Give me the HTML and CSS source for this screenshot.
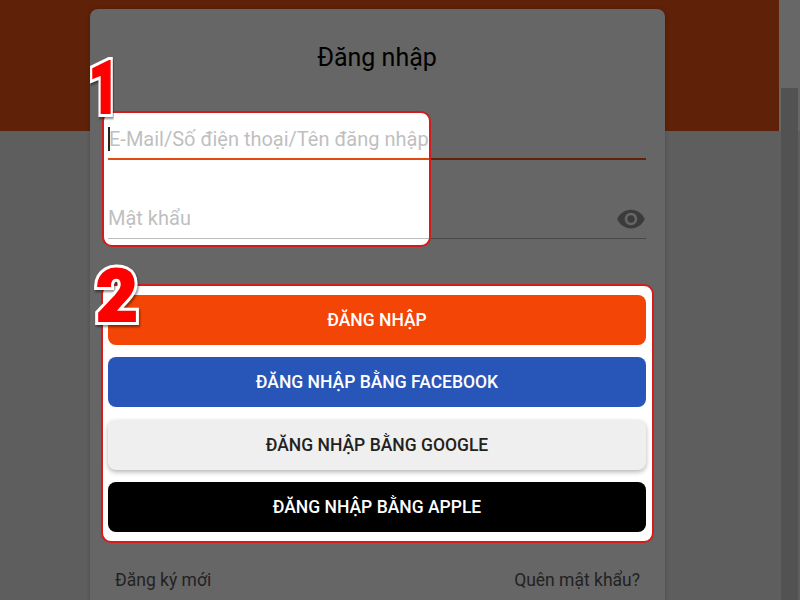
FILE: index.html
```html
<!DOCTYPE html>
<html lang="vi">
<head>
<meta charset="utf-8">
<title>Đăng nhập</title>
<link rel="stylesheet" href="styles.css">
</head>
<body>
<div class="page">
  <main class="main">
    <header class="topbar"></header>
    <section class="dialog">
      <h1 class="title">Đăng nhập</h1>
      <div class="fields">
        <div class="field field-active"></div>
        <div class="field field-password">
          <svg class="eye" viewBox="0 0 24 24" aria-hidden="true"><path d="M12 4.5C7 4.5 2.73 7.61 1 12c1.73 4.39 6 7.5 11 7.5s9.27-3.11 11-7.5c-1.73-4.39-6-7.5-11-7.5zM12 17c-2.76 0-5-2.24-5-5s2.24-5 5-5 5 2.24 5 5-2.24 5-5 5zm0-8c-1.66 0-3 1.34-3 3s1.34 3 3 3 3-1.34 3-3-1.34-3-3-3z"/></svg>
        </div>
        <div class="spot-fields">
          <div class="field field-active"><span class="caret"></span><span class="placeholder">E-Mail/Số điện thoại/Tên đăng nhập</span></div>
          <div class="field"><span class="placeholder placeholder-low">Mật khẩu</span></div>
        </div>
      </div>
      <div class="spot-buttons">
        <button class="btn btn-primary">ĐĂNG NHẬP</button>
        <button class="btn btn-facebook">ĐĂNG NHẬP BẰNG FACEBOOK</button>
        <button class="btn btn-google">ĐĂNG NHẬP BẰNG GOOGLE</button>
        <button class="btn btn-apple">ĐĂNG NHẬP BẰNG APPLE</button>
      </div>
      <div class="links"><span>Đăng ký mới</span><span>Quên mật khẩu?</span></div>
    </section>
    <span class="mark mark-one" data-digit="1">1</span>
    <span class="mark mark-two" data-digit="2">2</span>
  </main>
  <aside class="scrollbar"><div class="thumb"></div></aside>
</div>
</body>
</html>
```
FILE: styles.css
```css
* { box-sizing: border-box; }
html, body { margin: 0; height: 100%; overflow: hidden; }
body { font-family: Roboto, "Liberation Sans", sans-serif; background: #5e5e5e; }
.page { display: flex; width: 800px; height: 600px; overflow: hidden; }
.main { position: relative; width: 779px; height: 600px; flex: none; }
.topbar { height: 131px; background: #5f2108; }
.dialog {
  position: absolute; left: 90px; top: 9px; width: 575px; height: 640px;
  padding: 31px 19px 0 18px; background: #666; border-radius: 8px;
  box-shadow: 0 0 4px rgba(0,0,0,.2);
}
.title { margin: 0; height: 36px; font-size: 25px; font-weight: 400; line-height: 36px; text-align: center; color: #000; }
.fields { position: relative; margin-top: 44px; }
.field { display: flex; align-items: center; height: 39px; border-bottom: 1px solid #474747; }
.field-active { height: 40px; border-bottom: 2px solid #5f2108; }
.field-password { margin-top: 40px; justify-content: flex-end; }
.eye { width: 30px; height: 30px; fill: #3b3b3b; }
.spot-fields {
  position: absolute; left: -6px; top: -9px; width: 329px; height: 136px;
  padding: 7px 0 0 4px; background: #fff; border: 2px solid #d01c1c; border-radius: 10px;
}
.spot-fields .field { border-bottom-color: #bdbdbd; margin-bottom: 40px; }
.spot-fields .field-active { border-bottom-color: #e14b12; }
.placeholder { font-size: 20px; color: #bfbfbf; white-space: nowrap; }
.placeholder-low { margin-bottom: 2px; }
.caret { width: 2px; height: 24px; margin-right: -1px; background: #222; }
.spot-buttons {
  display: flex; flex-direction: column; margin: 45px -8px 0 -7px;
  height: 259px; padding: 9px 6px 0 5px; background: #fff;
  border: 2px solid #d81a1a; border-radius: 10px;
}
.btn {
  display: block; width: 100%; height: 50px; flex: none; border: 0; border-radius: 8px;
  font-family: inherit; font-size: 17.5px; font-weight: 500; color: #fff;
}
.btn + .btn { margin-top: 12px; }
.btn-primary { background: #f34505; }
.btn-facebook { background: #2855b8; }
.btn-google { margin-top: 13px !important; background: #efefef; color: #222; box-shadow: 0 2px 5px rgba(0,0,0,.3); }
.btn-apple { background: #000; }
.links { display: flex; justify-content: space-between; margin-top: 25px; padding: 0 6px 0 7px; font-size: 17.5px; color: #222; line-height: 24px; }
.mark {
  position: absolute; z-index: 0; font-size: 72px; font-weight: 900; line-height: 72px; color: #f00;
  -webkit-text-stroke: 2px #f00;
}
.mark::before {
  content: attr(data-digit); position: absolute; left: 0; top: 0; z-index: -1;
  color: #fff; -webkit-text-stroke: 8px #fff;
  filter: drop-shadow(1px 2px 1px rgba(0,0,0,.45));
}
.mark-one { left: 83px; top: 53px; transform: scaleX(.72); }
.mark-two { left: 96px; top: 261px; }
.scrollbar { position: relative; flex: 1; background: linear-gradient(#676767 131px, #5e5e5e 131px); }
.thumb { position: absolute; left: 2px; right: 2px; top: 88px; bottom: 0; background: #525252; }
```
